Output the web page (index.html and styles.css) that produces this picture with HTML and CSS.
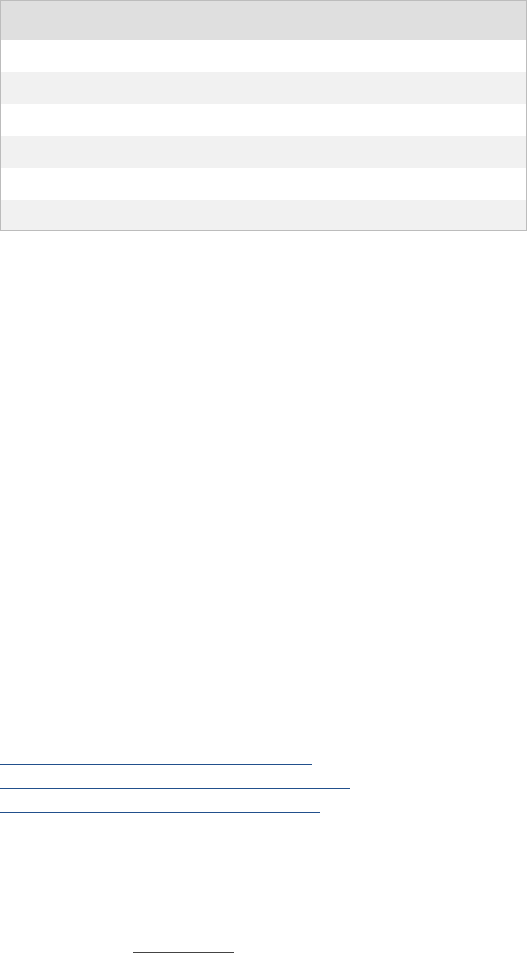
FILE: index.html
```html
<!DOCTYPE html>
<html lang="en">
<head>
<meta charset="utf-8">
<title>Table</title>
<link rel="stylesheet" href="styles.css">
</head>
<body>
<div class="page">
  <div class="data-table">
    <div class="row head"></div>
    <div class="row"></div>
    <div class="row alt"></div>
    <div class="row"></div>
    <div class="row alt"></div>
    <div class="row"></div>
    <div class="row alt last"></div>
  </div>
  <div class="links">
    <a class="link w1" href="#"></a>
    <a class="link w2" href="#"></a>
    <a class="link w3" href="#"></a>
  </div>
  <div class="footer">
    <a class="foot-link" href="#"></a>
  </div>
</div>
</body>
</html>
```

FILE: styles.css
```css
html, body {
  margin: 0;
  padding: 0;
  background: #ffffff;
  font-family: "Liberation Sans", Arial, sans-serif;
}
.page {
  width: 527px;
  height: 978px;
  display: flex;
  flex-direction: column;
}
.data-table {
  border: 1px solid #bcbcbc;
  display: flex;
  flex-direction: column;
}
.row {
  height: 32px;
  background: #ffffff;
}
.row.head {
  height: 39px;
  background: #dfdfdf;
}
.row.alt {
  background: #f1f1f1;
}
.row.last {
  height: 30px;
}
.links {
  margin-top: 533px;
  display: flex;
  flex-direction: column;
  gap: 23px;
}
.link {
  display: block;
  height: 0;
  border-bottom: 1px solid #22508c;
}
.w1 { width: 312px; }
.w2 { width: 350px; }
.w3 { width: 320px; }
.footer {
  margin-top: 139px;
  padding-left: 133px;
}
.foot-link {
  display: block;
  width: 101px;
  height: 0;
  border-bottom: 1px solid #444444;
}
```
